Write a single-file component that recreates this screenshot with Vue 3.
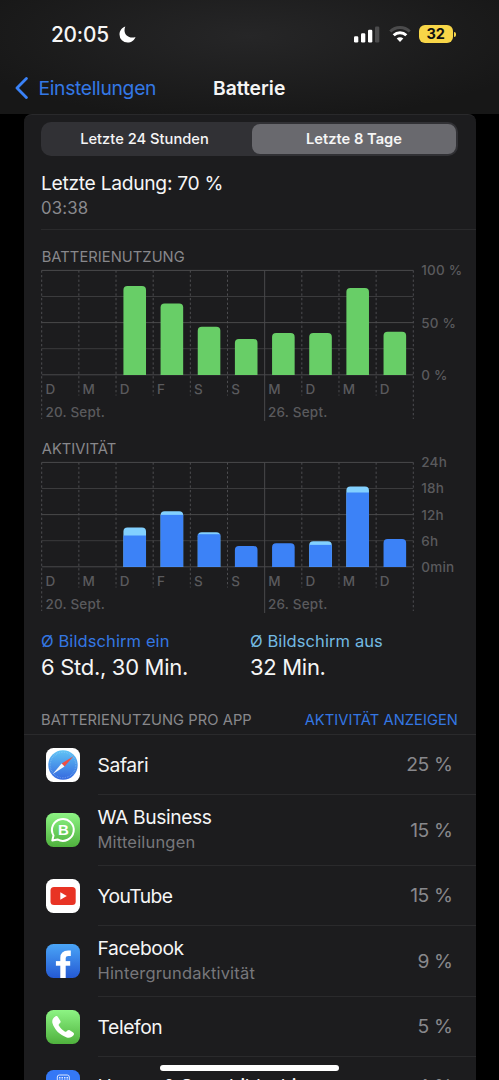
<template>
  <div class="screen">
    <header class="header">
      <div class="status">
        <span class="time">20:05</span>
        <svg class="moon" viewBox="0 0 17 17">
          <path d="M6.300 0.400C2.900 1.500 0.500 4.700 0.500 8.400a8.100 8.100 0 0 0 8.100 8.100c3.700 0 6.800-2.300 7.900-5.600c-1 .4-2.100 .6-3.200 .6C8.900 11.500 5.500 8.500 5.500 4.200c0-1.400 .3-2.700 .8-3.800z" />
        </svg>
        <svg class="signal" viewBox="0 0 26 17">
          <rect x="0" y="10.300" width="4.300" height="6.200" rx="1.200" />
          <rect x="7" y="7.300" width="4.300" height="9.200" rx="1.200" />
          <rect x="14" y="3.700" width="4.300" height="12.800" rx="1.200" />
          <rect class="dim" x="21" y="0.500" width="4.300" height="16" rx="1.200" />
        </svg>
        <svg class="wifi" viewBox="0 0 22 17">
          <path class="dim" d="M1.300 5.500a13.800 13.800 0 0 1 19.400 0" />
          <path d="M4.700 9.300a9 9 0 0 1 12.600 0" />
          <path class="dot" d="M7.700 12.500a4.700 4.700 0 0 1 6.600 0L11 16z" />
        </svg>
        <div class="battery">32</div>
      </div>
      <nav class="nav">
        <svg class="chevron" viewBox="0 0 13 22">
          <path d="M11.400 1.500L2 11l9.400 9.500" />
        </svg>
        <span class="back">Einstellungen</span>
        <span class="title">Batterie</span>
      </nav>
    </header>

    <main class="card">
      <div class="segment">
        <div class="option">Letzte 24 Stunden</div>
        <div class="option active">Letzte 8 Tage</div>
      </div>

      <div class="charge">
        <div class="charge-title">Letzte Ladung: 70 %</div>
        <div class="charge-time">03:38</div>
      </div>

      <section v-for="chart in charts" :key="chart.title" class="chart">
        <h2 class="caption">{{ chart.title }}</h2>
        <svg class="plot" viewBox="0 0 435 157">
          <line
            v-for="n in 5"
            :key="'h' + n"
            class="grid"
            :class="{ faint: n % 2 === 0 }"
            :x1="LEFT"
            :x2="LEFT + STEP * 10"
            :y1="TOP + (n - 1) * 26.1"
            :y2="TOP + (n - 1) * 26.1"
          />
          <line
            v-for="n in 11"
            :key="'v' + n"
            :class="n === 7 ? 'grid' : 'dash'"
            :x1="lineX(n - 1)"
            :x2="lineX(n - 1)"
            :y1="TOP"
            :y2="lineEnd(n)"
          />
          <g v-for="(bar, i) in chart.bars" :key="'b' + i">
            <template v-if="bar">
              <path :fill="bar[1] ? '#82d0ff' : chart.color" :d="barPath(i, bar[0])" />
              <rect
                v-if="bar[1]"
                :fill="chart.color"
                :x="lineX(i) + 7.4"
                :y="BASE - bar[1]"
                width="22.6"
                :height="bar[1]"
              />
            </template>
          </g>
          <text v-for="(day, i) in days" :key="'d' + i" :x="lineX(i) + 3.7" y="126.600">{{ day }}</text>
          <text class="date" :x="lineX(0) + 3.7" y="150.200">20. Sept.</text>
          <text class="date" :x="lineX(6) + 3.4" y="150.200">26. Sept.</text>
          <text
            v-for="(label, i) in chart.labels"
            :key="label"
            class="axis"
            x="380.300"
            :y="8.4 + (i * 104.3) / (chart.labels.length - 1)"
          >{{ label }}</text>
        </svg>
      </section>

      <div class="averages">
        <div class="average on">
          <div class="average-label">Ø Bildschirm ein</div>
          <div class="average-value">6 Std., 30 Min.</div>
        </div>
        <div class="average off">
          <div class="average-label">Ø Bildschirm aus</div>
          <div class="average-value">32 Min.</div>
        </div>
      </div>

      <div class="list-head">
        <span class="caption">BATTERIENUTZUNG PRO APP</span>
        <span class="caption link">AKTIVITÄT ANZEIGEN</span>
      </div>

      <div v-for="app in apps" :key="app.name" class="row" :class="[app.icon, { tall: app.detail }]">
        <svg class="icon" viewBox="0 0 34 34">
          <defs>
            <linearGradient id="green" x1="0" y1="0" x2="0" y2="1">
              <stop offset="0" stop-color="#8df484" />
              <stop offset="1" stop-color="#4fb13d" />
            </linearGradient>
            <linearGradient id="blue" x1="0" y1="0" x2="0" y2="1">
              <stop offset="0" stop-color="#4aa5f7" />
              <stop offset="1" stop-color="#2459d3" />
            </linearGradient>
            <linearGradient id="compass" x1="0" y1="0" x2="0" y2="1">
              <stop offset="0" stop-color="#5fc3f5" />
              <stop offset="1" stop-color="#3568df" />
            </linearGradient>
          </defs>
          <rect width="34" height="34" rx="7.500" :fill="app.fill" />
          <g v-if="app.icon === 'safari'">
            <circle cx="17" cy="17" r="14.700" fill="url(#compass)" />
            <circle cx="17" cy="17" r="12.800" fill="none" stroke="#b9defa" stroke-width="1.300" stroke-dasharray="0.6 1.1" opacity="0.45" />
            <path d="M27.500 8.300L15.600 15.500L18.500 18.500z" fill="#ef4e43" />
            <path d="M6.800 26L15.600 15.500L18.500 18.500z" fill="#f4f7fb" />
          </g>
          <g v-else-if="app.icon === 'whatsapp'">
            <path
              d="M6.300 27.500L7.500 22.500A10.900 10.900 0 1 1 11.500 26.400z"
              fill="none"
              stroke="#fff"
              stroke-width="2"
              stroke-linejoin="round"
            />
            <text class="letter" x="17.400" y="22.200">B</text>
          </g>
          <g v-else-if="app.icon === 'youtube'">
            <rect x="4.500" y="8" width="25.200" height="18" rx="3.500" fill="#e83324" />
            <path d="M14.300 13.300L20.800 17l-6.500 3.700z" fill="#fff" />
          </g>
          <g v-else-if="app.icon === 'facebook'" fill="none" stroke="#fff">
            <path d="M24.800 9.200H22.300Q17 9.200 17 14V34" stroke-width="5.400" />
            <path d="M9.900 19.400H24.200" stroke-width="4.600" />
          </g>
          <path
            v-else-if="app.icon === 'phone'"
            d="M9.300 6.600c1-.8 1.900-.6 2.600 .4l2.400 3.700c.5 .9 .4 1.500-.3 2.300l-1 1.100c-.4 .5-.4 1 0 1.700c1.500 2.400 3.400 4.300 5.700 5.700c.7 .4 1.200 .4 1.700 0l1-.9c.8-.7 1.500-.8 2.300-.3l3.500 2.300c1 .7 1.100 1.600 .3 2.600c-1.600 2.100-4 3.100-6.800 2.200c-7-2.300-12.100-7.600-14.200-14.100c-.8-2.600 .3-5.100 2.800-6.700z"
            fill="#fff"
          />
          <g v-else fill="none" stroke="#dbe7ff" stroke-width="1">
            <rect x="11.300" y="5" width="12" height="24" rx="2" />
            <path d="M13 7.800h9M13 10.200h9" stroke-dasharray="1.500 1" stroke-width="1.500" />
          </g>
        </svg>
        <div class="info">
          <div class="text">
            <div class="name">{{ app.name }}</div>
            <div v-if="app.detail" class="detail">{{ app.detail }}</div>
          </div>
          <span class="percent">{{ app.percent }} %</span>
        </div>
      </div>
    </main>
    <div class="home-indicator"></div>
  </div>
</template>

<script setup>
const LEFT = 0.7;
const STEP = 37.16;
const TOP = 3.4;
const BASE = 107.9;

const days = ['D', 'M', 'D', 'F', 'S', 'S', 'M', 'D', 'M', 'D'];

// every bar is [total height, height of the lower part]
const charts = [
  {
    title: 'BATTERIENUTZUNG',
    color: '#68ce67',
    labels: ['100 %', '50 %', '0 %'],
    bars: [null, null, [88.8], [71.4], [48.2], [36], [42], [42], [86.8], [43.2]],
  },
  {
    title: 'AKTIVITÄT',
    color: '#3c82f7',
    labels: ['24h', '18h', '12h', '6h', '0min'],
    bars: [null, null, [39.4, 31.4], [55.7, 52], [34.7, 32.7], [21], [23.7], [25.7, 22], [80.4, 74.4], [28]],
  },
];

const apps = [
  { name: 'Safari', percent: 25, icon: 'safari', fill: '#fff' },
  { name: 'WA Business', detail: 'Mitteilungen', percent: 15, icon: 'whatsapp', fill: 'url(#green)' },
  { name: 'YouTube', percent: 15, icon: 'youtube', fill: '#fff' },
  { name: 'Facebook', detail: 'Hintergrundaktivität', percent: 9, icon: 'facebook', fill: 'url(#blue)' },
  { name: 'Telefon', percent: 5, icon: 'phone', fill: 'url(#green)' },
  { name: 'Home- & Sperrbildschirm', percent: 4, icon: 'home', fill: '#3478f6' },
];

const lineX = (i) => LEFT + STEP * i;

const lineEnd = (n) => {
  if (n === 7) return 154;
  return n === 1 || n === 11 ? 152 : 128.5;
};

const barPath = (i, height) => {
  const x = lineX(i) + 7.4;
  return `M${x} ${BASE}v${4 - height}q0 -4 4 -4h14.6q4 0 4 4v${height - 4}z`;
};
</script>

<style>
body {
  margin: 0;
  background: #000;
}
</style>

<style scoped>
.screen {
  position: relative;
  width: 499px;
  height: 1080px;
  overflow: hidden;
  background: #000;
  color: #f5f5f5;
  font-family: Inter, 'Liberation Sans', sans-serif;
  white-space: nowrap;
}

.header {
  height: 113.5px;
  background: radial-gradient(ellipse 300px 85px at 50% 36px, #262627, #171717 100%);
}

.status {
  display: flex;
  align-items: center;
  height: 68px;
  padding: 0 43.500px 0 51px;
}

.time {
  width: 67.500px;
  font-size: 20.800px;
  font-weight: 550;
  letter-spacing: -0.200px;
}

.moon {
  width: 17px;
  height: 17px;
  margin-right: auto;
  fill: #fff;
}

.signal {
  width: 26px;
  height: 17px;
  margin-right: 9px;
  fill: #fff;
}

.signal .dim {
  fill: #4b4b4c;
}

.wifi {
  width: 22px;
  height: 17px;
  margin-right: 8.500px;
  overflow: visible;
  fill: none;
  stroke: #fff;
  stroke-width: 3;
}

.wifi .dim {
  stroke: #4b4b4c;
}

.wifi .dot {
  fill: #fff;
  stroke: none;
}

.battery {
  position: relative;
  width: 33.500px;
  height: 18px;
  margin-right: 3px;
  border-radius: 6px;
  background: #f8d648;
  color: #111;
  font-size: 14.500px;
  font-weight: 700;
  line-height: 18px;
  text-align: center;
}

.battery::after {
  content: '';
  position: absolute;
  top: 6.500px;
  right: -3.200px;
  width: 2px;
  height: 5px;
  border-radius: 0 2px 2px 0;
  background: #f8d648;
}

.nav {
  display: flex;
  align-items: center;
  height: 40px;
  padding-left: 15px;
  font-size: 19.300px;
}

.chevron {
  width: 13px;
  height: 22px;
  fill: none;
  stroke: #3a82f7;
  stroke-width: 2.800;
  stroke-linecap: round;
  stroke-linejoin: round;
}

.back {
  width: 174.500px;
  margin-left: 10.500px;
  color: #3478e5;
  letter-spacing: -0.320px;
}

.title {
  font-weight: 600;
}

.card {
  margin: 0 23px 0 23.500px;
  padding-left: 17.500px;
  border-top: 1px solid #29292b;
  border-radius: 8px 8px 0 0;
  background: #1c1c1e;
  box-sizing: border-box;
}

.segment {
  display: flex;
  width: 417px;
  height: 34px;
  margin-top: 7.500px;
  padding: 2px;
  border-radius: 10px;
  background: #313135;
  box-sizing: border-box;
}

.option {
  flex: 1;
  padding-right: 6px;
  border-radius: 8px;
  font-size: 14.700px;
  font-weight: 500;
  line-height: 30px;
  text-align: center;
}

.option.active {
  flex: 0 0 204px;
  padding-right: 0;
  background: #69696e;
  font-weight: 600;
}

.charge {
  padding: 13px 0 10px;
  border-bottom: 1px solid #2a2a2c;
}

.charge-title {
  font-size: 19.300px;
  line-height: 28px;
  letter-spacing: -0.320px;
}

.charge-time {
  color: #8a8a8e;
  font-size: 16.800px;
  line-height: 22px;
  letter-spacing: 0.150px;
}

.chart {
  padding-top: 17px;
}

.chart + .chart {
  padding-top: 15px;
}

.chart .caption {
  padding-left: 0.700px;
}

.caption {
  margin: 0;
  color: #88888c;
  font-size: 14.700px;
  font-weight: 400;
  line-height: 20px;
  letter-spacing: 0.060px;
}

.plot {
  display: block;
  width: 435px;
  height: 157px;
  overflow: visible;
}

.plot text {
  fill: #5a5a5d;
  font-size: 13.500px;
  font-weight: 500;
}

.plot .date,
.plot .axis {
  letter-spacing: 0.200px;
}

.grid {
  stroke: #49494b;
  stroke-width: 1;
}

.grid.faint {
  stroke: #3b3b3d;
}

.dash {
  stroke: #4d4d50;
  stroke-width: 1;
  stroke-dasharray: 2.300 2.300;
}

.averages {
  display: flex;
  padding-top: 14px;
}

.average {
  width: 209px;
}

.average-label {
  font-size: 16.500px;
  line-height: 22px;
  letter-spacing: 0.100px;
}

.on .average-label {
  color: #3477e3;
}

.off .average-label {
  color: #73bae3;
}

.average-value {
  margin-top: 1px;
  font-size: 22px;
  line-height: 28px;
  letter-spacing: -0.300px;
}

.list-head {
  display: flex;
  justify-content: space-between;
  margin: 29px 0 0 -17.500px;
  padding: 0 18px 3.500px 17.500px;
  border-bottom: 1px solid #2a2a2c;
}

.link {
  color: #3477e3;
}

.row {
  display: flex;
  align-items: center;
  height: 60.400px;
  padding-left: 5px;
}

.row.tall {
  height: 70.700px;
}

.icon {
  width: 34px;
  height: 34px;
}

.letter {
  fill: #fff;
  font-family: 'Liberation Sans', sans-serif;
  font-size: 15px;
  font-weight: 700;
  text-anchor: middle;
}

.info {
  display: flex;
  flex: 1;
  align-items: center;
  justify-content: space-between;
  height: 100%;
  margin-left: 17.500px;
  padding-right: 23.500px;
  border-bottom: 1px solid #2a2a2c;
  box-sizing: border-box;
}

.text {
  padding-top: 1.500px;
}

.tall .text {
  padding: 0 0 1.800px;
}

.home .text,
.home .percent {
  padding: 0 0 1.800px;
}

.name {
  font-size: 19.300px;
  line-height: 26px;
  letter-spacing: -0.400px;
}

.youtube .name {
  letter-spacing: -0.600px;
}

.detail {
  color: #77777b;
  font-size: 16.500px;
  line-height: 24px;
  letter-spacing: 0.180px;
}

.percent {
  color: #88888c;
  font-size: 19.300px;
  line-height: 26px;
  letter-spacing: -0.400px;
}

.home-indicator {
  position: absolute;
  left: 160px;
  bottom: 9px;
  width: 179px;
  height: 6.500px;
  border-radius: 4px;
  background: #fff;
}
</style>
